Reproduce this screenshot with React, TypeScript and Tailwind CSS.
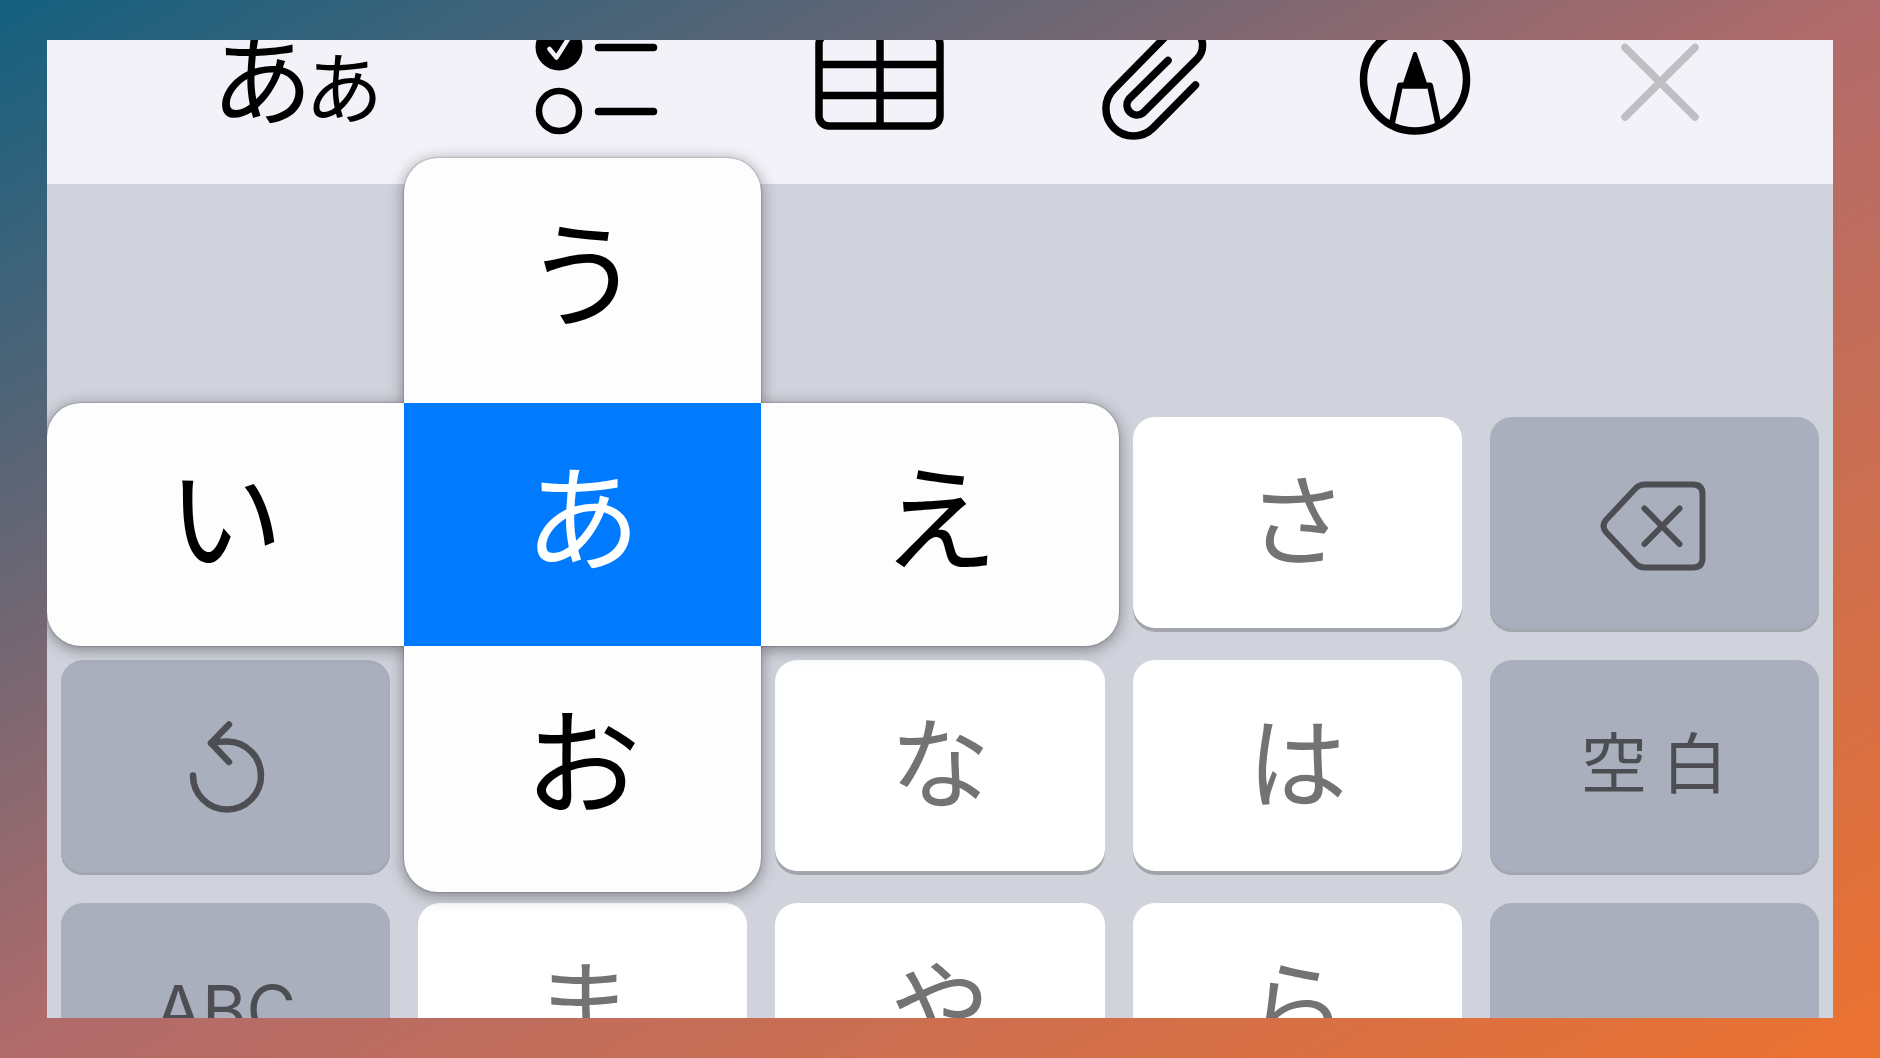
import { useState } from 'react'

type KeyIcon = 'undo' | 'backspace'

interface KeyDef {
    id: string
    label?: string
    icon?: KeyIcon
    name?: string
    tone: 'light' | 'dark'
    text?: string
    start?: string
}

const KANA_TEXT = "pb-5 text-[100px]"

const KEYS: KeyDef[] = [
    { id: 'sa', label: 'さ', tone: 'light', text: KANA_TEXT, start: 'col-start-4' },
    { id: 'delete', icon: 'backspace', name: '削除', tone: 'dark' },
    { id: 'undo', icon: 'undo', name: '戻す', tone: 'dark' },
    { id: 'na', label: 'な', tone: 'light', text: KANA_TEXT, start: 'col-start-3' },
    { id: 'ha', label: 'は', tone: 'light', text: KANA_TEXT },
    { id: 'space', label: '空 白', tone: 'dark', text: "pb-4 text-[66px]" },
    { id: 'abc', label: 'ABC', tone: 'dark', text: "pb-1 text-[68px] font-['Inter',sans-serif]" },
    { id: 'ma', label: 'ま', tone: 'light', text: KANA_TEXT },
    { id: 'ya', label: 'や', tone: 'light', text: KANA_TEXT },
    { id: 'ra', label: 'ら', tone: 'light', text: KANA_TEXT },
    { id: 'return', name: '改行', tone: 'dark' },
]

export default function App() {
    return (
        <div className="h-screen overflow-hidden bg-[linear-gradient(to_bottom_right,#13607f_0%,#b16b6b_50%,#ec7230_100%)] px-[47px] py-10 font-['Noto_Sans_CJK_JP',sans-serif]">
            <main className="flex h-full flex-col overflow-hidden bg-[#d0d3dc]">
                <Toolbar />
                <Keyboard />
            </main>
        </div>
    )
}

function Toolbar() {
    return (
        <header className="flex h-36 shrink-0 items-start justify-between bg-[#f3f2f9] pl-[168px] pr-[134px] text-black">
            <button type="button" aria-label="書式" className="flex w-[164px] items-baseline justify-center whitespace-nowrap leading-[68px]">
                <span className="text-[102px]">あ</span>
                <span className="-ml-2 text-[78px]">あ</span>
            </button>

            <button type="button" aria-label="チェックリスト">
                <svg width="134" height="100" viewBox="0 0 134 100" fill="none" stroke="currentColor" strokeLinecap="round">
                    <circle cx="30" cy="7" r="23.5" fill="currentColor" stroke="none" />
                    <path d="M20.5 9 27.5 17.5 41-4" stroke="#f3f2f9" strokeWidth="4.5" strokeLinejoin="round" />
                    <circle cx="30" cy="71" r="20" strokeWidth="6.5" />
                    <path d="M69.5 7.5H124.5M69.5 71.5H124.5" strokeWidth="7.5" />
                </svg>
            </button>

            <button type="button" aria-label="表">
                <svg width="136" height="100" viewBox="0 0 136 100" fill="none" stroke="currentColor" strokeWidth="7.5">
                    <rect x="7" y="-6" width="121" height="92" rx="10" />
                    <path d="M68-6V86M7 24.5H129M7 55.5H129" />
                </svg>
            </button>

            <button type="button" aria-label="添付">
                <svg width="112" height="100" viewBox="0 0 112 100" fill="none" stroke="currentColor" strokeWidth="7.5" strokeLinecap="round">
                    <path d="M97.5 45 55 88A27.5 27.5 0 0 1 16 49L72-8A19 19 0 0 1 99 19L45 73A10 10 0 0 1 31 59L70 20.5" />
                </svg>
            </button>

            <button type="button" aria-label="マークアップ">
                <svg width="112" height="100" viewBox="0 0 112 100" fill="none" stroke="currentColor" strokeLinejoin="round">
                    <circle cx="56" cy="39.5" r="51.5" strokeWidth="7.5" />
                    <path d="M33 83 41 45.5H71L79 83" strokeWidth="6" />
                    <path d="M56 14 67 46.5H45Z" fill="currentColor" strokeWidth="4" />
                </svg>
            </button>

            <button type="button" aria-label="閉じる" className="text-[#bfbec4]">
                <svg width="78" height="100" viewBox="0 0 78 100" fill="none" stroke="currentColor" strokeWidth="7.5" strokeLinecap="round">
                    <path d="M4 7.5 74 77M74 7.5 4 77" />
                </svg>
            </button>
        </header>
    )
}

function Keyboard() {
    return (
        <section className="grid auto-rows-[215px] grid-cols-5 gap-7 px-3.5 pt-[233px]">
            {/* Pressed key, its flick guide spills over the neighbours */}
            <div className="relative col-start-2 row-start-1">
                <FlickGuide />
            </div>

            {KEYS.map((item) => (
                <Key key={item.id} item={item} />
            ))}
        </section>
    )
}

function Key({ item }: { item: KeyDef }) {
    return (
        <button
            type="button"
            aria-label={item.name}
            className={cn(
                "flex items-center justify-center rounded-[22px]",
                item.start,
                item.text,
                item.tone === 'light'
                    ? "bg-white text-[#737373] shadow-[inset_0_-4px_0_#a2a5ab]"
                    : "bg-[#a9afbc] text-[#4d4e54] shadow-[inset_0_-3px_1px_#a3a6af]"
            )}
        >
            {item.icon === 'undo' && <UndoIcon />}
            {item.icon === 'backspace' && <BackspaceIcon />}
            {item.label}
        </button>
    )
}

function FlickGuide() {
    const [active, setActive] = useState('あ')

    const cell = (kana: string, place: string) => (
        <button
            type="button"
            onClick={() => setActive(kana)}
            className={cn(
                "flex items-center justify-center pb-7 text-[116px] leading-none",
                place,
                active === kana ? "bg-[#007aff] text-white" : "bg-[#fdfdfd] text-black"
            )}
        >
            {kana}
        </button>
    )

    return (
        <div className="absolute -top-[259px] left-[calc(-100%-42px)] z-10 grid w-[calc(300%+84px)] grid-cols-3 grid-rows-[245px_243px_246px] [filter:drop-shadow(0_0_1px_rgba(0,0,0,0.35))_drop-shadow(0_3px_8px_rgba(0,0,0,0.4))]">
            {cell('う', 'col-start-2 row-start-1 rounded-t-[34px]')}
            {cell('い', 'col-start-1 row-start-2 rounded-l-[34px]')}
            {cell('あ', 'col-start-2 row-start-2')}
            {cell('え', 'col-start-3 row-start-2 rounded-r-[34px]')}
            {cell('お', 'col-start-2 row-start-3 rounded-b-[34px]')}
        </div>
    )
}

function UndoIcon() {
    return (
        <svg width="80" height="96" viewBox="0 0 80 96" fill="none" stroke="currentColor" strokeWidth="6.5" strokeLinecap="round" strokeLinejoin="round">
            <path d="M7 55.5A34 34 0 1 0 41 21.5Q33 21.5 25 23" />
            <path d="M43 4.5 25 23 43 42" />
        </svg>
    )
}

function BackspaceIcon() {
    return (
        <svg width="108" height="92" viewBox="0 0 108 92" fill="none" stroke="currentColor" strokeWidth="6" strokeLinecap="round" strokeLinejoin="round">
            <path d="M45 5.5H93Q102.5 5.5 102.5 15V79Q102.5 88.5 93 88.5H45Q39 88.5 35 84L6 53Q1 47 6 41L35 10Q39 5.5 45 5.5Z" />
            <path d="M44.5 29.5 79.5 65M79.5 29.5 44.5 65" />
        </svg>
    )
}

function cn(...inputs: (string | boolean | undefined | null)[]) {
    return inputs.filter(Boolean).join(' ')
}
